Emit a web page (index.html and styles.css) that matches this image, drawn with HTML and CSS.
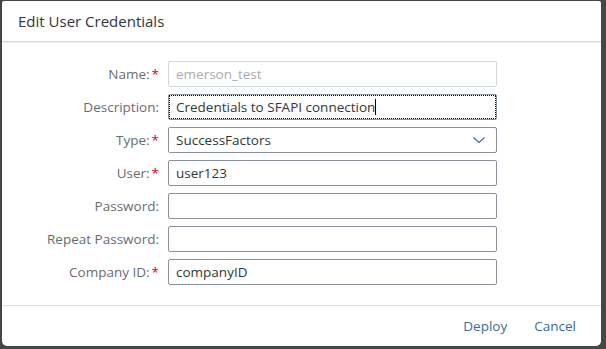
FILE: index.html
```html
<!DOCTYPE html>
<html lang="en">
<head>
    <meta charset="UTF-8">
    <title>Edit User Credentials</title>
    <link rel="stylesheet" href="styles.css">
</head>
<body>

    <div class="dialog">
        <div class="dialog-header">
            <h1>Edit User Credentials</h1>
        </div>

        <form class="cred-form">
            <label for="name">Name:<span class="req">*</span></label>
            <input type="text" id="name" value="emerson_test" disabled>

            <label for="desc">Description:</label>
            <div class="field focused">
                <span class="value">Credentials to SFAPI connection</span><span class="caret"></span>
            </div>

            <label for="type">Type:<span class="req">*</span></label>
            <div class="field select">
                <span class="value">SuccessFactors</span>
                <svg class="chevron" width="14" height="8" viewBox="0 0 14 8">
                    <path d="M1.5 1.5 L7 6.5 L12.5 1.5" fill="none" stroke="#3f6c99" stroke-width="1.1"/>
                </svg>
            </div>

            <label for="user">User:<span class="req">*</span></label>
            <input type="text" id="user" value="user123">

            <label for="pass">Password:</label>
            <input type="password" id="pass">

            <label for="pass2">Repeat Password:</label>
            <input type="password" id="pass2">

            <label for="company">Company ID:<span class="req">*</span></label>
            <input type="text" id="company" value="companyID">
        </form>

        <div class="dialog-footer">
            <button type="button" class="link-btn">Deploy</button>
            <button type="button" class="link-btn">Cancel</button>
        </div>
    </div>

</body>
</html>
```

FILE: styles.css
```css
body {
    margin: 0;
    padding: 1px 5px 3px 2px;
    background-color: #464646;
    font-family: 'Open Sans', 'Liberation Sans', sans-serif;
}

.dialog {
    height: 345px;
    background-color: #fff;
    border-radius: 2px 2px 5px 5px;
    display: flex;
    flex-direction: column;
}

.dialog-header {
    height: 40px;
    border-bottom: 1px solid #d9d9d9;
    box-shadow: 0 1px 1px rgba(0, 0, 0, 0.05);
    display: flex;
    align-items: center;
    padding-left: 16px;
}

h1 {
    margin: 0;
    font-size: 15px;
    font-weight: normal;
    color: #32363a;
}

.cred-form {
    display: grid;
    grid-template-columns: 157px 329px;
    column-gap: 9px;
    row-gap: 7px;
    grid-auto-rows: 26px;
    padding: 19px 0 20px;
    border-bottom: 1px solid #dcdcdc;
}

label {
    justify-self: end;
    align-self: center;
    font-size: 13.5px;
    color: #6a6d70;
}

.req {
    color: #d0021b;
    margin-left: 2px;
}

input, .field {
    box-sizing: border-box;
    height: 26px;
    margin: 0;
    padding: 0 7px;
    border: 1px solid #89919a;
    border-radius: 2px;
    font-family: 'Open Sans', 'Liberation Sans', sans-serif;
    font-size: 13.5px;
    color: #32363a;
    background-color: #fff;
}

input:disabled {
    border-color: #d3d6d9;
    color: #a9acaf;
}

.field {
    display: flex;
    align-items: center;
}

.focused {
    outline: 1px dotted #000;
    outline-offset: -2px;
}

.caret {
    display: inline-block;
    width: 1px;
    height: 16px;
    background-color: #000;
}

.select {
    justify-content: space-between;
    padding-right: 10px;
}

.dialog-footer {
    flex: 1;
    display: flex;
    justify-content: flex-end;
    align-items: center;
    gap: 27px;
    padding-right: 25px;
}

.link-btn {
    border: none;
    background: none;
    padding: 0;
    font-family: 'Open Sans', 'Liberation Sans', sans-serif;
    font-size: 13.5px;
    color: #3b6a98;
    cursor: pointer;
}
```
